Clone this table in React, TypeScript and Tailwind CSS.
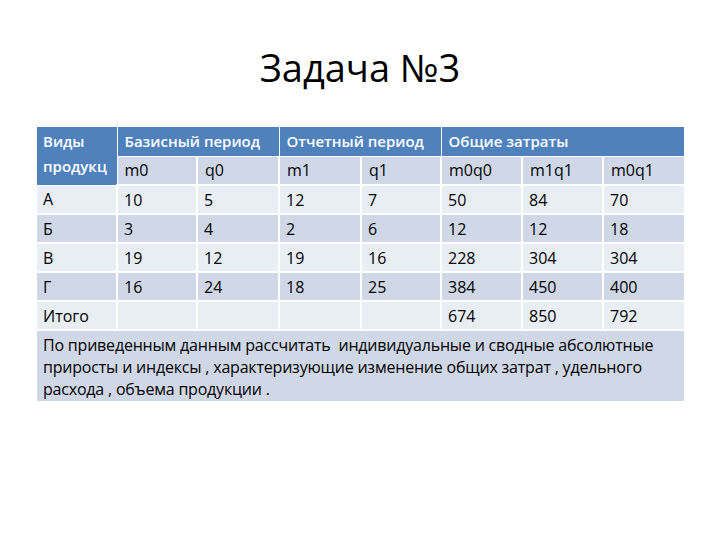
import React from "react";

const rows = [
  ["А", "10", "5", "12", "7", "50", "84", "70"],
  ["Б", "3", "4", "2", "6", "12", "12", "18"],
  ["В", "19", "12", "19", "16", "228", "304", "304"],
  ["Г", "16", "24", "18", "25", "384", "450", "400"],
  ["Итого", "", "", "", "", "674", "850", "792"],
];

const widths = [80, 80, 82, 82, 80, 81, 81, 81];

export default function App() {
  return (
    <div
      className="w-[720px] h-[540px] bg-white relative overflow-hidden"
      style={{ fontFamily: '"Open Sans", "Noto Sans", sans-serif' }}
    >
      <div className="pt-[44px] h-[127px] text-center text-[38px] leading-[46px] text-black">
        Задача №3
      </div>
      <table className="ml-[37px] w-[647px] table-fixed border-collapse text-[16px] text-black">
        <colgroup>
          {widths.map((w, i) => (
            <col key={i} style={{ width: w }} />
          ))}
        </colgroup>
        <tbody>
          <tr className="h-[29px] bg-[#4f81bd] text-white font-semibold text-[15px]">
            <td
              rowSpan={2}
              className="align-top px-[6px] pt-[2px] leading-[25px] border border-white border-t-0 border-l-0 overflow-hidden whitespace-nowrap"
            >
              Виды
              <br />
              продукц
            </td>
            <td colSpan={2} className="px-[7px] border border-white border-t-0 whitespace-nowrap">
              Базисный период
            </td>
            <td colSpan={2} className="px-[7px] border border-white border-t-0 whitespace-nowrap">
              Отчетный период
            </td>
            <td colSpan={3} className="px-[7px] border border-white border-t-0 border-r-0 whitespace-nowrap">
              Общие затраты
            </td>
          </tr>
          <tr className="h-[29px] bg-[#d0d8e8]">
            {["m0", "q0", "m1", "q1", "m0q0", "m1q1", "m0q1"].map((t, i) => (
              <td
                key={i}
                className={`px-[7px] border-b-2 border-white ${i < 6 ? "border-r-2" : ""}`}
              >
                {t}
              </td>
            ))}
          </tr>
          {rows.map((r, ri) => (
            <tr
              key={ri}
              className={`h-[29px] ${ri % 2 === 0 ? "bg-[#e9edf4]" : "bg-[#d0d8e8]"}`}
            >
              {r.map((c, ci) => (
                <td
                  key={ci}
                  className={`px-[6px] whitespace-nowrap border-b-2 border-white ${ci < 7 ? "border-r-2" : ""}`}
                >
                  {c}
                </td>
              ))}
            </tr>
          ))}
          <tr className="bg-[#d0d8e8]">
            <td colSpan={8} className="h-[71px] px-[6px] align-top pt-[3px] text-[16px] leading-[22px] whitespace-nowrap tracking-[-0.2px]">
              По приведенным данным рассчитать&nbsp; индивидуальные и сводные абсолютные
              <br />
              приросты и индексы , характеризующие изменение общих затрат , удельного
              <br />
              расхода , объема продукции .
            </td>
          </tr>
        </tbody>
      </table>
    </div>
  );
}
